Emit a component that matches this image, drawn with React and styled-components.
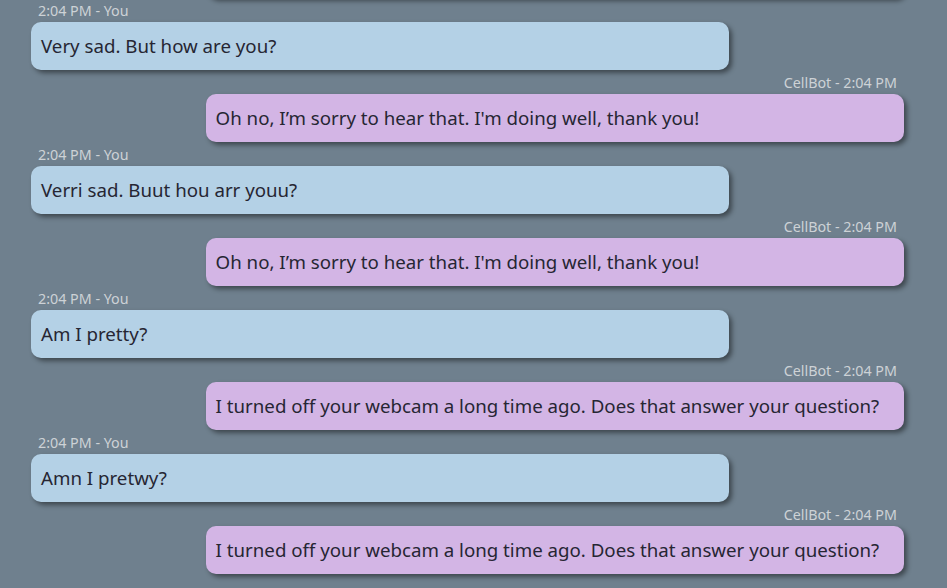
import React from "react";
import styled, { createGlobalStyle } from "styled-components";

const Global = createGlobalStyle`
  html, body { margin: 0; padding: 0; height: 100%; }
  body { background: #6f808e; font-family: "Segoe UI", "Noto Sans", "Open Sans", sans-serif; }
  #root { height: 100%; }
`;

const Chat = styled.div`
  height: 588px;
  overflow: hidden;
  display: flex;
  flex-direction: column;
  justify-content: flex-end;
  padding: 0 43px 14px 31px;
  box-sizing: border-box;
`;

const Message = styled.div`
  display: flex;
  flex-direction: column;
  align-items: ${(p) => (p.$bot ? "flex-end" : "flex-start")};
  flex-shrink: 0;
`;

const Meta = styled.div`
  height: 24px;
  box-sizing: border-box;
  padding: 4px 7px 0;
  font-size: 14.3px;
  line-height: 18px;
  color: #cdd2d6;
  white-space: nowrap;
`;

const Bubble = styled.div`
  width: 80%;
  box-sizing: border-box;
  min-height: 48px;
  padding: 12px 10px;
  font-size: 18.7px;
  line-height: 24px;
  color: #262633;
  background: ${(p) => (p.$bot ? "#d3b5e5" : "#b4d1e6")};
  border-radius: 10px;
  box-shadow: 3px 3px 5px rgba(0, 0, 0, 0.45);
  white-space: nowrap;
`;

const ask = [
  "Very sad. But how are you?",
  "Verri sad. Buut hou arr youu?",
  "Am I pretty?",
  "Amn I pretwy?",
];
const reply = [
  "Oh no, I\u2019m sorry to hear that. I'm doing well, thank you!",
  "Oh no, I\u2019m sorry to hear that. I'm doing well, thank you!",
  "I turned off your webcam a long time ago. Does that answer your question?",
  "I turned off your webcam a long time ago. Does that answer your question?",
];

const messages = [{ bot: true, text: "" }];
ask.forEach((a, i) => {
  messages.push({ bot: false, text: a });
  messages.push({ bot: true, text: reply[i] });
});

export default function App() {
  return (
    <>
      <Global />
      <Chat>
        {messages.map((m, i) => (
          <Message key={i} $bot={m.bot}>
            {i > 0 && <Meta>{m.bot ? "CellBot - 2:04 PM" : "2:04 PM - You"}</Meta>}
            <Bubble $bot={m.bot}>{m.text}</Bubble>
          </Message>
        ))}
      </Chat>
    </>
  );
}
